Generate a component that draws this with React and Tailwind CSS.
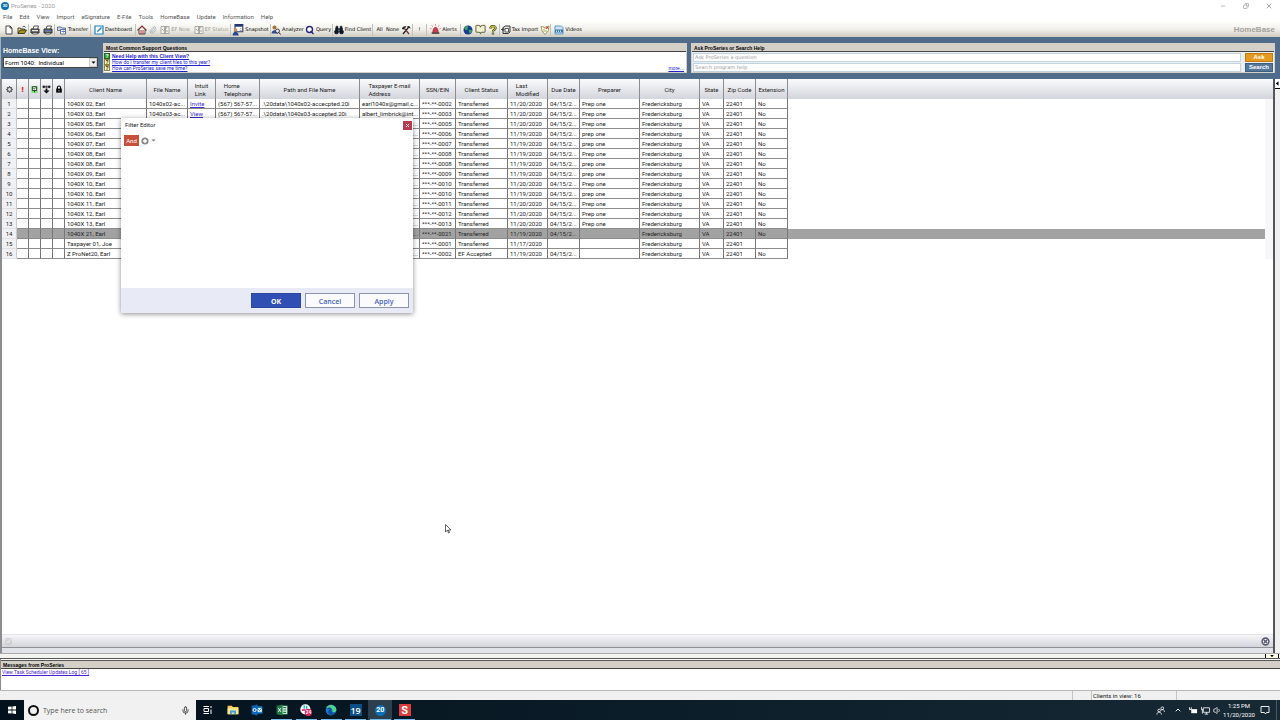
import React from 'react'
import { Paperclip, BookOpen, Mic, ChevronUp, Volume1, Minus, Copy, X, Binoculars } from 'lucide-react'

const menuItems = ['File', 'Edit', 'View', 'Import', 'eSignature', 'E-File', 'Tools', 'HomeBase', 'Update', 'Information', 'Help']

const columns = [
  { label: 'Client Name', width: 'w-[82px]' },
  { label: 'File Name', width: 'w-[41px]' },
  { label: 'Intuit\nLink', width: 'w-[28px]' },
  { label: 'Home\nTelephone', width: 'w-[44px]' },
  { label: 'Path and File Name', width: 'w-[100px]' },
  { label: 'Taxpayer E-mail\nAddress', width: 'w-[60px]' },
  { label: 'SSN/EIN', width: 'w-[36px]' },
  { label: 'Client Status', width: 'w-[52px]' },
  { label: 'Last\nModified', width: 'w-[40px]' },
  { label: 'Due Date', width: 'w-[32px]' },
  { label: 'Preparer', width: 'w-[60px]' },
  { label: 'City', width: 'w-[60px]' },
  { label: 'State', width: 'w-[24px]' },
  { label: 'Zip Code', width: 'w-[32px]' },
  { label: 'Extension', width: 'w-[32px]' }
]

const mail = 'earl1040x@gmail.c...'

const clients = [
  { name: '1040X 02, Earl', file: '1040x02-ac...', link: 'Invite', phone: '(567) 567-57...', path: '.\\20data\\1040x02-accecpted.20i', email: mail, ssn: '0002', modified: '11/20/2020', due: true, preparer: 'Prep one' },
  { name: '1040X 03, Earl', file: '1040x03-ac...', link: 'View', phone: '(567) 567-57...', path: '.\\20data\\1040x03-accepted.20i', email: 'albert_limbrick@int...', ssn: '0003', modified: '11/20/2020', due: true, preparer: 'Prep one' },
  { name: '1040X 05, Earl', email: mail, ssn: '0005', modified: '11/20/2020', due: true, preparer: 'Prep one' },
  { name: '1040X 06, Earl', email: mail, ssn: '0006', modified: '11/19/2020', due: true, preparer: 'prep one' },
  { name: '1040X 07, Earl', email: mail, ssn: '0007', modified: '11/19/2020', due: true, preparer: 'prep one' },
  { name: '1040X 08, Earl', email: mail, ssn: '0008', modified: '11/19/2020', due: true, preparer: 'Prep one' },
  { name: '1040X 08, Earl', email: mail, ssn: '0008', modified: '11/19/2020', due: true, preparer: 'prep one' },
  { name: '1040X 09, Earl', email: mail, ssn: '0009', modified: '11/19/2020', due: true, preparer: 'prep one' },
  { name: '1040X 10, Earl', email: mail, ssn: '0010', modified: '11/20/2020', due: true, preparer: 'Prep one' },
  { name: '1040X 10, Earl', email: mail, ssn: '0010', modified: '11/19/2020', due: true, preparer: 'prep one' },
  { name: '1040X 11, Earl', email: mail, ssn: '0011', modified: '11/20/2020', due: true, preparer: 'Prep one' },
  { name: '1040X 12, Earl', email: mail, ssn: '0012', modified: '11/20/2020', due: true, preparer: 'Prep one' },
  { name: '1040X 13, Earl', email: mail, ssn: '0013', modified: '11/20/2020', due: true, preparer: 'Prep one' },
  { name: '1040X 21, Earl', email: mail, ssn: '0021', modified: '11/19/2020', due: true, preparer: '', selected: true },
  { name: 'Taxpayer 01, Joe', email: '', ssn: '0001', modified: '11/17/2020', due: false, preparer: '', extension: '' },
  { name: 'Z ProNet20, Earl', email: mail, ssn: '0002', status: 'EF Accepted', modified: '11/19/2020', due: true, preparer: '' }
]

/* Toolbar drawings */

function Icon({ children, size = 'size-[10px]' }) {
  return (
    <svg viewBox="0 0 20 20" className={`${size} shrink-0`} aria-hidden="true">
      {children}
    </svg>
  )
}

const NewIcon = () => (
  <Icon>
    <path d="M4 2h8l4 4v12H4z" fill="#fff" stroke="#222" strokeWidth="1.6" />
    <path d="M12 2v4h4" fill="none" stroke="#222" strokeWidth="1.6" />
  </Icon>
)

const OpenIcon = () => (
  <Icon>
    <path d="M2 17V6h5l1 2h7v3" fill="#f5e27a" stroke="#222" strokeWidth="1.6" />
    <path d="M2 17l4-7h13l-4 7z" fill="#a89412" stroke="#222" strokeWidth="1.6" />
    <path d="M11 4c2-2 5-2 6 1" fill="none" stroke="#222" strokeWidth="1.6" />
  </Icon>
)

const PrintIcon = ({ accent = '#e9e9e9' }) => (
  <Icon>
    <path d="M6 8l2-6h9l-2 6" fill="#fff" stroke="#222" strokeWidth="1.5" />
    <path d="M2 8h16v8H2z" fill="#777" stroke="#222" strokeWidth="1.8" />
    <path d="M4 11h12" stroke={accent} strokeWidth="2" />
    <path d="M5 15h10v3H5z" fill="#ddd" stroke="#222" strokeWidth="1.2" />
  </Icon>
)

const TransferIcon = () => (
  <Icon>
    <path d="M1 4h7l2 2h7v5H1z" fill="#cfd8ea" stroke="#43598c" strokeWidth="1.6" />
    <path d="M7 9h10v9H7z" fill="#fff" stroke="#43598c" strokeWidth="1.6" />
    <path d="M9 13h6M13 11l2 2-2 2" fill="none" stroke="#2455a8" strokeWidth="1.5" />
  </Icon>
)

const DashboardIcon = () => (
  <Icon>
    <path d="M2 2h16v16H2z" fill="#fff" stroke="#1f83c4" strokeWidth="2.4" />
    <path d="M6 15l1-4 7-7 2 2-7 7z" fill="#1f83c4" />
  </Icon>
)

const HomeIcon = () => (
  <Icon>
    <path d="M4 9v9h12V9" fill="#fff" stroke="#333" strokeWidth="1.8" />
    <path d="M1 11l9-9 9 9" fill="none" stroke="#7a3030" strokeWidth="2.4" />
    <path d="M7 10h2v8H7zM11 10h2v8h-2z" fill="#b02a2a" />
  </Icon>
)

const FormIcon = () => (
  <Icon>
    <path d="M2 3h9v14H2zM9 3h9v14H9z" fill="#f4f4f0" stroke="#9a9a94" strokeWidth="1.6" />
    <path d="M4 8l3 3 8-7M11 12h5" fill="none" stroke="#9a9a94" strokeWidth="1.8" />
  </Icon>
)

const SnapshotIcon = () => (
  <Icon size="size-3">
    <path d="M5 1h13v12H5z" fill="#fff" stroke="#26386e" strokeWidth="1.8" />
    <path d="M5 3h13" stroke="#26386e" strokeWidth="3" />
    <circle cx="6" cy="10" r="3" fill="#c98f5a" />
    <path d="M1 19c0-8 10-8 10 0z" fill="#27488f" />
    <path d="M13 8h3M13 11h3" stroke="#888" strokeWidth="1.4" />
  </Icon>
)

const AnalyzerIcon = () => (
  <Icon>
    <circle cx="7" cy="5" r="4" fill="#a8703a" />
    <path d="M1 17c0-9 13-9 13 0z" fill="#2d4b96" />
    <circle cx="13" cy="12" r="4" fill="#dde6f5" stroke="#222" strokeWidth="1.6" />
    <path d="M16 15l3 4" stroke="#222" strokeWidth="2" />
  </Icon>
)

const QueryIcon = () => (
  <Icon>
    <circle cx="9" cy="9" r="6" fill="#fff" stroke="#26267c" strokeWidth="2.8" />
    <path d="M11 12l6 6" stroke="#26267c" strokeWidth="3" />
  </Icon>
)

const ToolsIcon = () => (
  <Icon>
    <path d="M4 18L14 6" stroke="#222" strokeWidth="2.6" />
    <path d="M16 18L7 7" stroke="#6b3a3a" strokeWidth="2.6" />
    <path d="M2 8c0-4 5-7 9-5L5 9z" fill="#222" />
    <path d="M13 2c4-1 6 2 6 5l-3-1-3 1z" fill="#222" />
  </Icon>
)

const AlertIcon = () => (
  <Icon size="size-[11px]">
    <path d="M5 15c0-12 10-12 10 0z" fill="#c9404e" stroke="#8f2a36" />
    <path d="M3 15h14v3H3z" fill="#5a3a3e" />
    <path d="M10 0v3M3 2l2 3M17 2l-2 3M0 8l3 1M20 8l-3 1" stroke="#e07a84" strokeWidth="1.4" />
  </Icon>
)

const WebIcon = () => (
  <Icon>
    <circle cx="10" cy="10" r="9" fill="#163a9c" />
    <path d="M4 4c3-3 6-2 7 0-1 2-3 2-2 4 1 1-1 3-3 2-3 0-4-3-2-6zM12 10c3-1 6 0 6 2-1 3-3 5-5 5 0-3-3-5-1-7z" fill="#45a84a" />
  </Icon>
)

const ImportIcon = () => (
  <Icon>
    <path d="M4 5l5-3h9v12l-4 3H4z" fill="#dfe3e8" stroke="#222" strokeWidth="1.8" />
    <path d="M8 7h7v7H8z" fill="#fff" stroke="#222" strokeWidth="1.4" />
    <path d="M0 9h5M3 6l3 3-3 3" fill="none" stroke="#222" strokeWidth="1.6" />
  </Icon>
)

const ShieldIcon = () => (
  <Icon>
    <path d="M2 3l6 1 2 3 2-3 6-2-1 9-7 8-6-7z" fill="#fbfbe6" stroke="#8a8a3c" strokeWidth="1.6" />
    <path d="M12 3l5 5M17 3l-5 5" stroke="#d03030" strokeWidth="1.8" />
    <path d="M8 8v6M12 10v4" stroke="#8a8a3c" strokeWidth="1.4" />
  </Icon>
)

const VideoIcon = () => (
  <Icon>
    <path d="M2 2h13l3 3v13H2z" fill="#cfe4f5" stroke="#4a86b8" strokeWidth="1.6" />
    <path d="M2 9h16v6H2z" fill="#2f78b7" />
    <path d="M5 11v3M9 11v3M13 11v3" stroke="#fff" strokeWidth="1.6" />
  </Icon>
)

const HelpIcon = () => (
  <Icon>
    <path d="M5 7c0-6 10-6 10-1 0 4-5 3-5 7" fill="none" stroke="#222" strokeWidth="4.6" />
    <path d="M5 7c0-6 10-6 10-1 0 4-5 3-5 7" fill="none" stroke="#c9c52a" strokeWidth="2.6" />
    <circle cx="10" cy="17" r="2" fill="#c9c52a" stroke="#222" />
  </Icon>
)

// sep draws the divider at the right edge of the button
const tools = [
  { name: 'New', icon: <NewIcon />, width: 'w-3' },
  { name: 'Open', icon: <OpenIcon />, width: 'w-[14px]', sep: true },
  { name: 'Print', icon: <PrintIcon />, width: 'w-3' },
  { name: 'Print preview', icon: <PrintIcon accent="#4a6fd0" />, width: 'w-[14px]', sep: true },
  { text: 'Transfer', icon: <TransferIcon />, width: 'w-[36px]', sep: true },
  { text: 'Dashboard', icon: <DashboardIcon />, width: 'w-[45px]', sep: true },
  { name: 'Home', icon: <HomeIcon />, width: 'w-3' },
  { name: 'Attach', icon: <Paperclip className="size-2 shrink-0 text-gray-400" />, width: 'w-[10px]' },
  { text: 'EF Now', icon: <FormIcon />, width: 'w-[34px]', disabled: true },
  { text: 'EF Status', icon: <FormIcon />, width: 'w-[39px]', disabled: true, sep: true },
  { text: 'Snapshot', icon: <SnapshotIcon />, width: 'w-[40px]', sep: true },
  { text: 'Analyzer', icon: <AnalyzerIcon />, width: 'w-[33px]' },
  { text: 'Query', icon: <QueryIcon />, width: 'w-[29px]', sep: true },
  { text: 'Find Client', icon: <Binoculars className="size-[10px] shrink-0 text-gray-900" fill="currentColor" />, width: 'w-[40px]', sep: true },
  { text: 'All', width: 'w-[13px]' },
  { text: 'None', width: 'w-[13px]' },
  { name: 'Options', icon: <ToolsIcon />, width: 'w-[14px]', sep: true },
  { text: '!', width: 'w-[14px]', sep: true },
  { text: 'Alerts', icon: <AlertIcon />, width: 'w-[34px]', sep: true },
  { name: 'Web', icon: <WebIcon />, width: 'w-[13px]' },
  { name: 'Guide', icon: <BookOpen className="size-[11px] shrink-0 text-[#55552c]" fill="#f2f2d2" />, width: 'w-3' },
  { name: 'Help', icon: <HelpIcon />, width: 'w-[14px]', sep: true },
  { text: 'Tax Import', icon: <ImportIcon />, width: 'w-[39px]' },
  { name: 'Protection', icon: <ShieldIcon />, width: 'w-3', sep: true },
  { text: 'Videos', icon: <VideoIcon />, width: 'w-[34px]' }
]

function ToolButton({ tool }) {
  return (
    <button
      type="button"
      aria-label={tool.name}
      disabled={tool.disabled}
      className={`flex h-3 shrink-0 items-center justify-center gap-px whitespace-nowrap text-[5px] ${tool.width} ${tool.sep ? 'border-r border-[#c4c2b6]' : ''} ${tool.disabled ? 'text-[#9a9a94]' : 'text-black'}`}
    >
      {tool.icon}
      {tool.text && <span>{tool.text}</span>}
    </button>
  )
}

function TopBars() {
  return (
    <header>
      <div className="flex h-[11px] items-center gap-[2px] pl-[1px] text-[#999]">
        <span className="flex size-2 items-center justify-center rounded-full bg-[#0b6fae] text-[4px] font-bold text-white">20</span>
        <span className="flex-1">ProSeries - 2020</span>
        <div className="flex items-center text-[#777]">
          <button type="button" aria-label="Minimize" className="flex w-[23px] justify-center"><Minus className="size-[6px]" /></button>
          <button type="button" aria-label="Restore" className="flex w-[23px] justify-center"><Copy className="size-[6px] -scale-x-100" /></button>
          <button type="button" aria-label="Close" className="flex w-[23px] justify-center"><X className="size-2" /></button>
        </div>
      </div>
      <nav className="flex h-[11px] items-center gap-[7px] px-[3px] text-[#555]">
        {menuItems.map((item) => (
          <button key={item} type="button">{item}</button>
        ))}
      </nav>
      <div className="flex h-[15px] items-center bg-linear-to-b from-[#fdfdfb] via-[#f0efe9] to-[#cfccc2] pr-[5px] pl-[3px] font-['DejaVu_Sans',sans-serif]">
        {tools.map((tool) => (
          <ToolButton key={tool.name || tool.text} tool={tool} />
        ))}
        <span className="ml-auto font-['Liberation_Sans',sans-serif] text-[8px] font-bold text-[#a3a19b]">HomeBase</span>
      </div>
    </header>
  )
}

function SupportLink({ children, bold }) {
  return (
    <li className="flex h-[6px] items-center gap-[2px]">
      <span className={`flex h-[6px] w-[6px] items-center justify-center border text-[5px] font-bold leading-none ${bold ? 'border-[#1d6b22] bg-[#35a03c] text-white' : 'border-[#8b8640] bg-[#fffbc0] text-black'}`}>?</span>
      <a href="#" className={`text-[#2222cc] underline ${bold ? 'font-bold' : "font-['Roboto',sans-serif]"}`}>{children}</a>
    </li>
  )
}

function PanelTitle({ children }) {
  return <h2 className="h-2 border-b border-[#444] bg-[#d4d0c8] pl-[2px] text-[5px] leading-[8px] font-bold text-black">{children}</h2>
}

function HomeBaseBand() {
  return (
    <section className="flex gap-1 border-l border-[#9fb0c0] bg-[#4f6d8a] py-[6px] pr-[5px] font-['Liberation_Sans',sans-serif]">
      <div className="flex w-[98px] shrink-0 flex-col gap-[2px] pt-1 pl-[2px]">
        <label htmlFor="view" className="text-[7px] leading-[8px] font-bold text-white">HomeBase View:</label>
        <div className="relative mr-px">
          <select id="view" className="block h-[11px] w-full appearance-none border border-[#444] bg-white pl-[1px] font-['Roboto',sans-serif] text-[6px] leading-[9px] text-black">
            <option>{'Form 1040:\u00a0 Individual'}</option>
          </select>
          <span className="pointer-events-none absolute inset-y-px right-px flex w-2 items-center justify-center border border-[#ccc] bg-[#f0efea]">
            <Icon size="size-[5px]"><path d="M2 6h16l-8 9z" fill="#000" /></Icon>
          </span>
        </div>
      </div>
      <div className="h-[30px] flex-1 border border-[#d4d0c8] bg-white">
        <PanelTitle>Most Common Support Questions</PanelTitle>
        <div className="flex items-end justify-between pr-[2px] text-[5px] leading-[6px]">
          <ul className="pt-px">
            <SupportLink bold>Need Help with this Client View?</SupportLink>
            <SupportLink>How do I transfer my client files to this year?</SupportLink>
            <SupportLink>How can ProSeries save me time?</SupportLink>
          </ul>
          <a href="#" className="text-[#2222cc] underline">more...</a>
        </div>
      </div>
      <div className="h-[30px] flex-1 border border-[#d4d0c8] bg-[#e9eff2]">
        <PanelTitle>Ask ProSeries or Search Help</PanelTitle>
        <form className="grid grid-cols-[1fr_28px] gap-x-1 gap-y-px p-px pr-[1px]">
          <input aria-label="Ask ProSeries a question" placeholder="Ask ProSeries a question" className="h-[9px] border border-[#c3d3de] bg-white px-[1px] font-['DejaVu_Sans',sans-serif] text-[5px] placeholder:text-[#999]" />
          <button type="button" className="h-[9px] border border-[#c47a10] bg-[#e39a1e] text-[6px] leading-[7px] font-bold text-white">Ask</button>
          <input aria-label="Search program help" placeholder="Search program help" className="h-[9px] border border-[#c3d3de] bg-white px-[1px] font-['DejaVu_Sans',sans-serif] text-[5px] placeholder:text-[#999]" />
          <button type="button" className="h-[9px] border border-[#3d5f7e] bg-[#55789a] text-[6px] leading-[7px] font-bold text-white">Search</button>
        </form>
      </div>
    </section>
  )
}

function HeadCell({ children, className = '' }) {
  return <th scope="col" className={`h-5 border-r border-[#8b8d92] p-0 font-normal ${className}`}>{children}</th>
}

function Cell({ children, selected }) {
  return (
    <td className={`h-[10px] overflow-hidden border-r border-b border-r-[#777] border-b-[#8c8c8c] pt-px pr-0 pb-0 pl-[2px] leading-[8px] whitespace-nowrap ${selected ? 'bg-[#a2a2a2]' : 'bg-white'}`}>
      {children}
    </td>
  )
}

function ClientRow({ client, number }) {
  const { selected } = client
  return (
    <tr>
      <th scope="row" className="h-[10px] border-r border-b border-r-[#c9ccd2] border-b-[#dfe1e6] bg-[#f0f1f5] p-0 text-center leading-[9px] font-normal">{number}</th>
      <Cell selected={selected} />
      <Cell selected={selected} />
      <Cell selected={selected} />
      <Cell selected={selected} />
      <Cell selected={selected}>{client.name}</Cell>
      <Cell selected={selected}>{client.file}</Cell>
      <Cell selected={selected}>{client.link && <a href="#" className="text-[#3a2fd0] underline">{client.link}</a>}</Cell>
      <Cell selected={selected}>{client.phone}</Cell>
      <Cell selected={selected}>{client.path}</Cell>
      <Cell selected={selected}>{client.email}</Cell>
      <Cell selected={selected}>***-**-{client.ssn}</Cell>
      <Cell selected={selected}>{client.status || 'Transferred'}</Cell>
      <Cell selected={selected}>{client.modified}</Cell>
      <Cell selected={selected}>{client.due ? '04/15/2...' : ''}</Cell>
      <Cell selected={selected}>{client.preparer}</Cell>
      <Cell selected={selected}>Fredericksburg</Cell>
      <Cell selected={selected}>VA</Cell>
      <Cell selected={selected}>22401</Cell>
      <Cell selected={selected}>{client.extension ?? 'No'}</Cell>
      <td className={`p-0 ${selected ? 'bg-[#a2a2a2]' : ''}`} />
      <td className="bg-[#f7f7f7] p-0" />
    </tr>
  )
}

function ClientTable() {
  return (
    <table className="w-full table-fixed border-separate border-spacing-0 text-[6px] text-[#222]">
      <colgroup>
        <col className="w-[15px]" />
        <col className="w-3" />
        <col className="w-3" />
        <col className="w-3" />
        <col className="w-3" />
        {columns.map((column) => <col key={column.label} className={column.width} />)}
        <col />
        <col className="w-2" />
      </colgroup>
      <thead>
        <tr className="bg-linear-to-b from-[#fbfbfc] to-[#d3d5dc]">
          <HeadCell>
            <Icon size="mx-auto size-[7px]">
              <circle cx="10" cy="10" r="6" fill="none" stroke="#666" strokeWidth="4" />
              <path d="M10 0v4M10 16v4M0 10h4M16 10h4M3 3l3 3M14 14l3 3M17 3l-3 3M6 14l-3 3" stroke="#666" strokeWidth="3" />
            </Icon>
          </HeadCell>
          <HeadCell><span className="text-[8px] leading-none font-black text-[#d42020]">!</span></HeadCell>
          <HeadCell>
            <Icon size="mx-auto size-[7px]">
              <path d="M1 0h18v20H1z" fill="#7be874" />
              <path d="M4 2h12v11H4z" fill="#d8f8d4" stroke="#222" strokeWidth="2.4" />
              <path d="M7 7l2 2 4-4M10 13v5" fill="none" stroke="#222" strokeWidth="2.4" />
            </Icon>
          </HeadCell>
          <HeadCell>
            <Icon size="mx-auto size-[9px]">
              <circle cx="4" cy="4" r="3" fill="#222" />
              <circle cx="10" cy="4" r="3" fill="#555" />
              <circle cx="16" cy="4" r="3" fill="#222" />
              <path d="M8 8h4v4h5l-7 7-7-7h5z" fill="#111" />
            </Icon>
          </HeadCell>
          <HeadCell>
            <Icon size="mx-auto size-[8px]">
              <path d="M6 10V6c0-5 8-5 8 0v4" fill="none" stroke="#000" strokeWidth="2.6" />
              <path d="M3 9h14v10H3z" fill="#000" />
              <path d="M10 12v4" stroke="#ddd" strokeWidth="2" />
            </Icon>
          </HeadCell>
          {columns.map((column) => (
            <HeadCell key={column.label}>
              <span className="inline-block pt-[2px] text-left leading-[8px] whitespace-pre">{column.label}</span>
            </HeadCell>
          ))}
          <td className="p-0" />
          <td className="p-0" />
        </tr>
      </thead>
      <tbody>
        {clients.map((client, index) => (
          <ClientRow key={index} client={client} number={index + 1} />
        ))}
      </tbody>
    </table>
  )
}

function FilterEditor() {
  return (
    <div role="dialog" aria-label="Filter Editor" className="absolute top-[39px] left-[119px] flex h-[195px] w-[292px] flex-col bg-white shadow-[0_1px_5px_rgba(0,0,0,0.45)]">
      <div className="flex h-[14px] items-center justify-between pr-px pl-1 text-[6px] text-[#222]">
        <h2 className="pb-px">Filter Editor</h2>
        <button type="button" aria-label="Close" className="flex size-[9px] items-center justify-center bg-[#b93a4d] text-white"><X className="size-[5px]" strokeWidth={4} /></button>
      </div>
      <div className="flex flex-1 items-start gap-[2px] px-[3px] pt-[3px]">
        <button type="button" className="h-[11px] w-[15px] bg-[#c94f3d] text-[6px] leading-[10px] text-white">And</button>
        <button type="button" aria-label="Add condition" className="flex h-[11px] items-center gap-[2px]">
          <Icon size="size-2">
            <circle cx="10" cy="10" r="9" fill="#8a8a8a" />
            <path d="M10 5v10M5 10h10" stroke="#fff" strokeWidth="3.6" />
          </Icon>
          <Icon size="size-[5px]"><path d="M2 6h16l-8 8z" fill="#777" /></Icon>
        </button>
      </div>
      <div className="flex h-[25px] items-center justify-end gap-1 bg-[#e8eaf6] pr-1 font-['Open_Sans',sans-serif] text-[7px] leading-[13px] font-semibold">
        <button type="button" className="h-[15px] w-[50px] border border-[#2b47a0] bg-[#2f4fb4] pt-px font-bold text-white">OK</button>
        <button type="button" className="h-[15px] w-[50px] border border-[#8d93a8] bg-[#fbfbfe] pt-px text-[#4464c0]">Cancel</button>
        <button type="button" className="h-[15px] w-[50px] border border-[#8d93a8] bg-[#fbfbfe] pt-px text-[#4464c0]">Apply</button>
      </div>
    </div>
  )
}

function ClientGrid() {
  return (
    <main className="flex flex-1 border-l-2 border-[#8a8c90]">
      <div className="relative flex min-w-0 flex-1 flex-col border-r-2 border-[#55565c]">
        <div className="flex-1">
          <ClientTable />
        </div>
        <div className="flex h-[14px] items-center justify-between border-t border-b border-t-[#e4e4e8] border-b-[#8e9096] bg-linear-to-b from-[#f6f6f8] to-[#d3d5dc] pr-[3px] pl-[3px]">
          <input type="checkbox" aria-label="Filter active" defaultChecked disabled className="size-[7px] opacity-70" />
          <button type="button" aria-label="Clear filter">
            <Icon size="size-[9px]">
              <circle cx="10" cy="10" r="7.5" fill="#fff" stroke="#5a5a78" strokeWidth="3.4" />
              <path d="M6 6l8 8M14 6l-8 8" stroke="#5a5a78" strokeWidth="3" />
            </Icon>
          </button>
        </div>
        <div className="h-[5px] bg-[#e1e3e9]" />
        <FilterEditor />
        {/* mouse pointer */}
        <svg viewBox="0 0 12 20" className="absolute top-[445px] left-[443px] h-[10px] w-[6px]" aria-hidden="true">
          <path d="M1 1v15l4-4 2 6 2-1-2-5h5z" fill="#fff" stroke="#222" strokeWidth="1.4" />
        </svg>
      </div>
      <aside className="w-[5px] bg-[#f0f0f0]">
        <button type="button" aria-label="Show side panel" className="flex h-[10px] w-full items-center justify-center border-b border-black bg-white">
          <Icon size="size-[5px]"><path d="M14 1v18L3 10z" fill="#000" /></Icon>
        </button>
      </aside>
    </main>
  )
}

function Messages() {
  return (
    <section className="font-['Liberation_Sans',sans-serif]">
      <div className="flex h-[6px] justify-end border-y border-t-[#aaa] border-b-[#555] bg-[#f3f3f1] pr-px">
        <button type="button" aria-label="Hide messages" className="flex w-[14px] items-center justify-center border-x border-black bg-[#fffde8]">
          <Icon size="size-1"><path d="M1 5h18l-9 11z" fill="#000" /></Icon>
        </button>
      </div>
      <div className="border-l border-[#8a8c90] bg-white pt-px">
        <div className="border-t border-[#555]"><PanelTitle>Messages from ProSeries</PanelTitle></div>
        <div className="h-[21px] pl-px text-[5px] leading-[6px]">
          <a href="#" className="font-['Roboto',sans-serif] text-[#4a22cc] underline">View Task Scheduler Updates Log [ 65 ]</a>
        </div>
      </div>
    </section>
  )
}

function StatusBar() {
  return (
    <footer className="flex h-[10px] border-t border-[#b8b8b8] bg-[#f0f0f0] text-[6px] leading-[9px] text-[#222]">
      <div className="flex-1 border-r border-[#c4c4c4]" />
      <div className="w-[18px]" />
      <div className="w-[86px] border-x border-[#c4c4c4] pl-px">Clients in view: 16</div>
      <div className="w-[103px]" />
    </footer>
  )
}

/* Taskbar */

const apps = [
  {
    name: 'Task View',
    icon: (
      <Icon>
        <path d="M1 3h11M1 17h11M2 7h9v6H2zM16 2v4M16 9v9" fill="none" stroke="#fff" strokeWidth="2" />
      </Icon>
    )
  },
  {
    name: 'File Explorer',
    icon: (
      <Icon size="size-3">
        <path d="M1 3h7l2 2h9v12H1z" fill="#f3cf55" />
        <path d="M1 7h18v10H1z" fill="#fbe48e" />
        <path d="M5 17v-6h10v6h-3v-3H8v3z" fill="#3aa0d8" />
      </Icon>
    )
  },
  {
    name: 'Outlook',
    icon: (
      <Icon size="size-3">
        <path d="M9 4h10v12H9z" fill="#1c82d4" />
        <path d="M10 7h8v6h-8z" fill="#fff" />
        <path d="M10 7l4 4 4-4" fill="none" stroke="#1c82d4" strokeWidth="1.4" />
        <path d="M1 3l10-2v18L1 17z" fill="#0b64b8" />
        <circle cx="6" cy="10" r="2.6" fill="none" stroke="#fff" strokeWidth="1.6" />
      </Icon>
    )
  },
  {
    name: 'Excel',
    open: true,
    icon: (
      <Icon size="size-3">
        <path d="M9 3h10v14H9z" fill="#eaf5ee" stroke="#1f7a45" />
        <path d="M12 6h5M12 10h5M12 14h5" stroke="#1f7a45" strokeWidth="2" />
        <path d="M1 3l10-2v18L1 17z" fill="#1f7a45" />
        <path d="M4 7l4 6M8 7l-4 6" stroke="#fff" strokeWidth="1.6" />
      </Icon>
    )
  },
  {
    name: 'Slack',
    open: true,
    icon: (
      <Icon size="size-3">
        <circle cx="9" cy="9" r="8.5" fill="#fff" />
        <path d="M7 2v6" stroke="#36c5f0" strokeWidth="2.6" />
        <path d="M11 3v5" stroke="#2eb67d" strokeWidth="2.6" />
        <path d="M3 10h6" stroke="#e01e5a" strokeWidth="2.6" />
        <circle cx="14" cy="14" r="6" fill="#e01e5a" />
        <text x="14" y="17" fontSize="8" fontWeight="700" fill="#fff" textAnchor="middle">24</text>
      </Icon>
    )
  },
  {
    name: 'Edge',
    open: true,
    icon: (
      <Icon size="size-3">
        <circle cx="10" cy="10" r="9" fill="#1b78cf" />
        <path d="M2 7C5-1 18 0 19 9c0 5-6 5-7 3 2-3-2-7-10-5z" fill="#4fd68a" />
        <path d="M2 8c5-5 11-1 9 3-1 4 3 5 7 3-3 5-9 6-12 2-2-3 0-6 2-7-2-1-5-1-6-1z" fill="#0e4f9e" />
      </Icon>
    )
  },
  { name: 'ProSeries 2019', open: true, icon: <span className="flex size-3 items-center justify-center bg-[#0c4f86] font-['Open_Sans',sans-serif] text-[9px] font-semibold text-white">19</span> },
  { name: 'ProSeries 2020', open: true, active: true, icon: <span className="flex size-[11px] items-center justify-center rounded-full bg-[#0f6fb8] text-[7px] font-bold text-white">20</span> },
  { name: 'Snagit', open: true, icon: <span className="flex size-3 items-center justify-center bg-[#dc3d3d] text-[11px] leading-none font-bold text-white">S</span> }
]

function Taskbar() {
  return (
    <div className="flex h-5 items-center bg-linear-to-r from-[#03111c] to-[#162935] text-white">
      <button type="button" aria-label="Start" className="flex w-6 justify-center">
        <Icon size="size-2"><path d="M0 2l9-1v8H0zM11 1l9-1v9h-9zM0 11h9v8l-9-1zM11 11h9v9l-9-1z" fill="#fff" /></Icon>
      </button>
      <label className="flex h-5 w-[172px] items-center gap-1 bg-[#f1f1f1] pr-[6px] pl-1 text-[#555]">
        <span className="size-[11px] rounded-full border-2 border-[#111]" />
        <input aria-label="Type here to search" placeholder="Type here to search" className="min-w-0 flex-1 font-['Open_Sans',sans-serif] text-[7px] placeholder:text-[#555]" />
        <Mic className="size-[9px] text-[#222]" />
      </label>
      <div className="grid w-[221px] grid-cols-9">
        {apps.map((app) => (
          <button key={app.name} type="button" aria-label={app.name} className={`flex h-5 items-center justify-center ${app.active ? 'bg-[#2d3e4c]' : ''}`}>
            <span className={`flex h-5 w-[21px] items-center justify-center border-y border-t-transparent ${app.open ? 'border-b-[#76b9ed]' : 'border-b-transparent'}`}>{app.icon}</span>
          </button>
        ))}
      </div>
      <div className="ml-auto flex items-center">
        <button type="button" aria-label="People" className="flex w-[18px] justify-center">
          <Icon size="size-[9px]">
            <circle cx="7" cy="10" r="3" fill="none" stroke="#fff" strokeWidth="1.8" />
            <path d="M2 19c0-7 10-7 10 0M12 9c3-2 7 0 7 4" fill="none" stroke="#fff" strokeWidth="1.8" />
            <circle cx="14" cy="5" r="3" fill="none" stroke="#fff" strokeWidth="1.8" />
          </Icon>
        </button>
        <button type="button" aria-label="Show hidden icons" className="flex w-[18px] justify-center"><ChevronUp className="size-2" strokeWidth={3} /></button>
        <span className="flex w-3 justify-center">
          <Icon size="size-[9px]">
            <path d="M5 7h13v9H5z" fill="#fff" />
            <path d="M1 3v5h4M5 3v5" fill="none" stroke="#fff" strokeWidth="2" />
          </Icon>
        </span>
        <span className="flex w-3 justify-center">
          <Icon size="size-[9px]">
            <path d="M5 4h14v10H5zM12 14v4M8 18h8M1 2v6h4M3 8v9" fill="none" stroke="#fff" strokeWidth="1.8" />
          </Icon>
        </span>
        <span className="flex w-3 justify-center"><Volume1 className="size-[9px]" /></span>
        <div className="w-8 text-center text-[6px] leading-[9px]">
          <div>1:25 PM</div>
          <div>11/20/2020</div>
        </div>
        <button type="button" aria-label="Notifications" className="flex w-5 justify-center">
          <Icon>
            <path d="M2 3h16v12h-5l-2 3-2-3H2z" fill="none" stroke="#fff" strokeWidth="1.8" />
          </Icon>
        </button>
        <div className="mr-[3px] ml-px h-5 w-px bg-[#4b5962]" />
      </div>
    </div>
  )
}

export default function App() {
  return (
    <div className="flex min-h-screen flex-col bg-white font-['Roboto','Noto_Sans',sans-serif] text-[6px] leading-[9px]">
      <TopBars />
      <HomeBaseBand />
      <ClientGrid />
      <Messages />
      <StatusBar />
      <Taskbar />
    </div>
  )
}
